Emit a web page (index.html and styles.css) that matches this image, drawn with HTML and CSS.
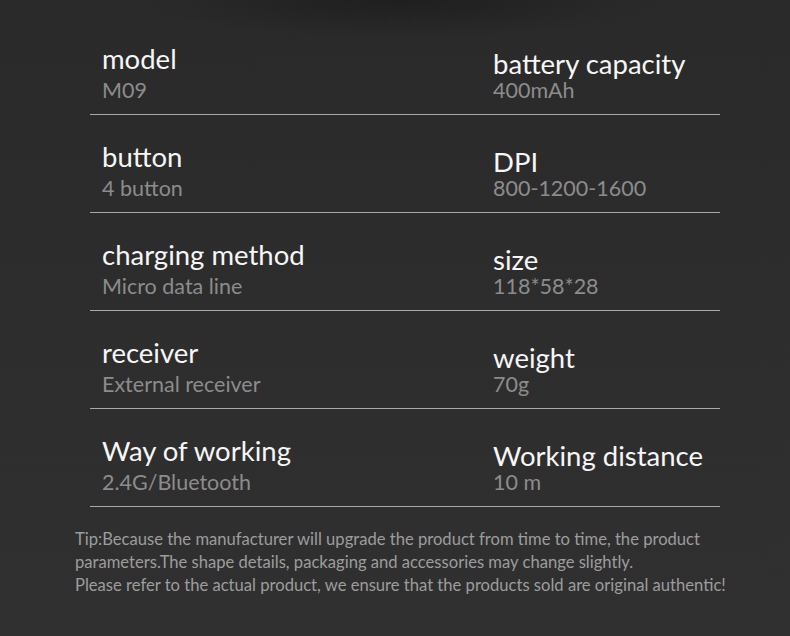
FILE: index.html
```html
<!DOCTYPE html>
<html>
<head>
<meta charset="utf-8">
<title>M09 parameters</title>
<link rel="stylesheet" href="styles.css">
</head>
<body>
<div class="page">
	<div class="spec_table">
		<div class="spec_row">
			<div class="cell">
				<div class="name">model</div>
				<div class="value">M09</div>
			</div>
			<div class="cell right">
				<div class="name">battery capacity</div>
				<div class="value">400mAh</div>
			</div>
		</div>
		<div class="spec_row">
			<div class="cell">
				<div class="name">button</div>
				<div class="value">4 button</div>
			</div>
			<div class="cell right">
				<div class="name">DPI</div>
				<div class="value">800-1200-1600</div>
			</div>
		</div>
		<div class="spec_row">
			<div class="cell">
				<div class="name">charging method</div>
				<div class="value">Micro data line</div>
			</div>
			<div class="cell right">
				<div class="name">size</div>
				<div class="value">118*58*28</div>
			</div>
		</div>
		<div class="spec_row">
			<div class="cell">
				<div class="name">receiver</div>
				<div class="value">External receiver</div>
			</div>
			<div class="cell right">
				<div class="name">weight</div>
				<div class="value">70g</div>
			</div>
		</div>
		<div class="spec_row">
			<div class="cell">
				<div class="name">Way of working</div>
				<div class="value">2.4G/Bluetooth</div>
			</div>
			<div class="cell right">
				<div class="name">Working distance</div>
				<div class="value">10 m</div>
			</div>
		</div>
	</div>
	<p class="tip">
		Tip:Because the manufacturer will upgrade the product from time to time, the product<br>
		parameters.The shape details, packaging and accessories may change slightly.<br>
		Please refer to the actual product, we ensure that the products sold are original authentic!
	</p>
</div>
</body>
</html>
```

FILE: styles.css
```css
html, body {
margin:0;
padding:0;
}

body {
width:790px;
height:636px;
overflow:hidden;
font-family:Lato, "Open Sans", sans-serif;
background:
	radial-gradient(ellipse 260px 40px at 400px 0, #1f1f1f, rgba(31,31,31,0)),
	linear-gradient(#2a2a2a, #303030);
}

.page {
padding-top:17px;
}

.spec_table {
width:630px;
margin-left:90px;
}

.spec_row {
display:grid;
grid-template-columns:391px 1fr;
height:97px;
border-bottom:1px solid #a9a9a9;
}

.cell {
padding:26px 0 0 12px;
}

.name {
color:#f6f6f6;
font-size:27.5px;
line-height:32px;
}

.value {
margin-top:3px;
color:#8c8c8c;
font-size:21.5px;
line-height:24px;
}

.right .name {
padding-top:7px;
line-height:28px;
}

.right .value {
margin-top:0;
}

.tip {
margin:21px 0 0 75px;
color:#9d9d9d;
font-size:16.6px;
line-height:23px;
}
```
